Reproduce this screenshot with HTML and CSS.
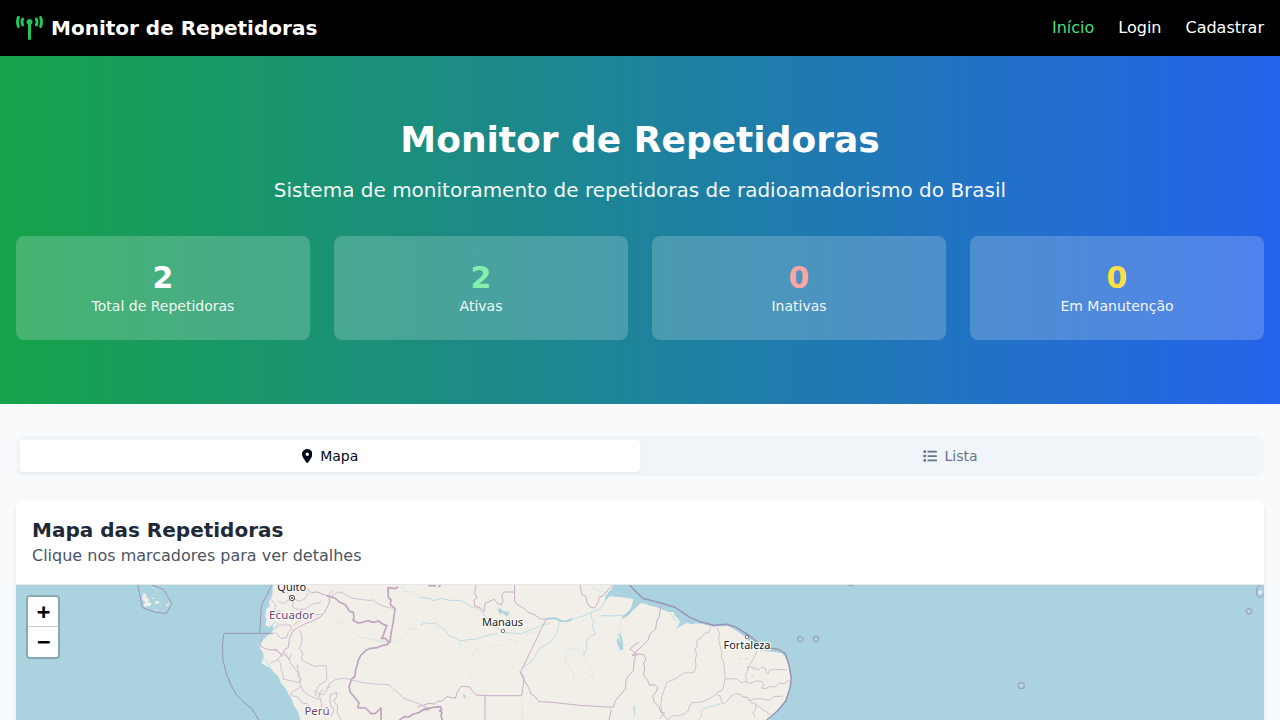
FILE: index.html
```html
<!DOCTYPE html>
<html lang="pt-BR">
<head>
<meta charset="utf-8">
<title>Monitor de Repetidoras</title>
<link rel="stylesheet" href="styles.css">
</head>
<body>
<header class="navbar">
  <div class="brand">
    <svg class="brand-icon" viewBox="0 0 576 512" fill="currentColor"><path d="M80.3 44C69.8 69.9 64 98.2 64 128s5.8 58.1 16.3 84c6.6 16.4-1.3 35-17.7 41.7s-35-1.3-41.7-17.7C7.4 202.6 0 166.1 0 128S7.4 53.4 20.9 20C27.6 3.6 46.2-4.3 62.6 2.3S86.900 27.600 80.300 44zM555.100 20C568.600 53.400 576 89.900 576 128s-7.400 74.600-20.900 108c-6.600 16.400-25.300 24.300-41.700 17.700S489.100 228.400 495.700 212c10.500-25.900 16.300-54.200 16.300-84s-5.800-58.100-16.300-84C489.100 27.600 497 9 513.400 2.300s35 1.300 41.700 17.700zM352 128c0 23.700-12.900 44.400-32 55.400V480c0 17.700-14.300 32-32 32s-32-14.300-32-32V183.400c-19.100-11.100-32-31.700-32-55.400c0-35.300 28.700-64 64-64s64 28.700 64 64zM170.600 76.800C163.800 92.400 160 109.700 160 128s3.800 35.600 10.600 51.200c7.100 16.200-.3 35.100-16.500 42.100s-35.100-.3-42.100-16.500c-10.300-23.600-16-49.600-16-76.800s5.700-53.200 16-76.800c7.100-16.200 25.900-23.600 42.100-16.500s23.600 25.900 16.500 42.100zM464 51.200c10.300 23.600 16 49.600 16 76.800s-5.700 53.200-16 76.800c-7.100 16.200-25.900 23.600-42.100 16.500s-23.600-25.900-16.500-42.100c6.800-15.600 10.600-32.900 10.600-51.200s-3.800-35.600-10.600-51.200c-7.100-16.200 .3-35.100 16.500-42.100s35.100 .3 42.100 16.500z"/></svg>
    <span>Monitor de Repetidoras</span>
  </div>
  <nav class="links"><a class="active">Início</a><a>Login</a><a>Cadastrar</a></nav>
</header>
<section class="hero">
  <h1>Monitor de Repetidoras</h1>
  <p class="lead">Sistema de monitoramento de repetidoras de radioamadorismo do Brasil</p>
  <div class="stats">
    <div class="stat"><div class="num">2</div><div class="label">Total de Repetidoras</div></div>
    <div class="stat"><div class="num green">2</div><div class="label">Ativas</div></div>
    <div class="stat"><div class="num red">0</div><div class="label">Inativas</div></div>
    <div class="stat"><div class="num yellow">0</div><div class="label">Em Manutenção</div></div>
  </div>
</section>
<main class="content">
  <div class="tabs">
    <div class="tab selected">
      <svg class="pin" viewBox="0 0 384 512" fill="currentColor"><path d="M215.700 499.200C267 435 384 279.400 384 192C384 86 298 0 192 0S0 86 0 192c0 87.400 117 243 168.300 307.200c12.300 15.300 35.100 15.300 47.400 0zM192 128a64 64 0 1 1 0 128 64 64 0 1 1 0-128z"/></svg>
      <span>Mapa</span>
    </div>
    <div class="tab">
      <svg class="list" viewBox="0 0 512 512" fill="currentColor"><rect x="16" y="48" width="96" height="96" rx="24"/><rect x="16" y="208" width="96" height="96" rx="24"/><rect x="16" y="368" width="96" height="96" rx="24"/><rect x="160" y="64" width="352" height="64" rx="32"/><rect x="160" y="224" width="352" height="64" rx="32"/><rect x="160" y="384" width="352" height="64" rx="32"/></svg>
      <span>Lista</span>
    </div>
  </div>
  <section class="card">
    <div class="card-head">
      <h2>Mapa das Repetidoras</h2>
      <p>Clique nos marcadores para ver detalhes</p>
    </div>
    <div class="map">
      <svg class="map-canvas" viewBox="0 0 1248 135">
        <!-- land mass -->
        <g transform="translate(194 -5) scale(.33333)">
          <path class="land" d="M190 0L187 45L176 65L180 78L168 88L166 110L170 121L165 136L178 142L188 135L191 149L184 157L172 167L162 177L152 190L151 206L160 219L161 235L154 249L164 256L182 264L193 278L205 290L213 309L226 324L237 345L246 359L252 378L263 394L275 430L1665 430L1690 405L1724 363L1739 325L1743 292L1738 260L1729 235L1716 220L1685 215L1653 212L1628 194L1607 172L1580 153L1553 138L1510 140L1480 133L1458 130L1446 133L1430 129L1414 137L1402 144L1410 125L1403 115L1393 106L1392 96L1378 97L1360 90L1338 81L1320 77L1307 72L1293 69L1281 80L1267 93L1255 106L1240 115L1234 111L1250 99L1262 87L1271 57L1235 52L1200 49L1185 62L1187 48L1199 35L1213 15V0Z"/>
        </g>
        <!-- rivers and lakes -->
        <g class="river" transform="translate(194 -5) scale(.33333)">
          <path d="M180 142l15-17 8 8-8 13M165 238l8 14 10 8"/>
          <path class="thin" d="M372 130l16-4 20 6M430 155l12 15 30 6 40 8 25 5 35-11 19-26 28-9M530 190l-20-7-21-7M580 20l5 14 25 2 22 15 25-1"/>
        </g>
        <g class="river" transform="translate(404 -5) scale(.33333)">
          <path d="M0 53l30 3 12 6 22-7 26 6 35 1 28 19 20 4 15 12 10 17 12 6 8 19 12 4 25 14 20 2 30 2 22-10 22-7 21-11 20-2"/>
          <path d="M0 135l18-7 10 3 20-2 8 10 17 8 14 20 17 6 17 10 24-4 26-2 23-9 22-5 18-3"/>
          <path class="thin" d="M122 184l-2 17M133 181l6 10M157 229l7-15 13-13M207 213l10-13 20-7M240 200l12-7 13-15 20 3 7 15M190 245l12 1M145 298l14-21M290 135l14 9 12 16 18-3 25-2"/>
          <path d="M238 84l12 11 17 2-6 12-12-11-9 3-5-9z" class="lake"/>
          <path class="wide" d="M380 116l28-1 15 8 18 1 15-7"/>
          <path d="M452 119l40-12 25-11 20-7 14-16 7-20 18-9 21-4M418 124l-8 36-13 21-12 9-29 17-12 25-20 21-18 9"/>
          <path d="M513 98l2 17 7 10-5 15 9 22-17 8-8 12-2 30-10 14" />
          <path class="thin" d="M487 203l-56 7 9 14-5 17 22 31 7 24M490 210l10 32 12 23 9 10-3 12-21 9M304 365l4 42-4 13M500 0l25 28 27 8 30 1M540 106l15 6 15-5M612 107l-13 25 4 34"/>
          <path class="wide" d="M655 55l-17 25-11 20-15 9M565 39l30-12 45 20 20 0"/>
          <path d="M610 105l-35 3-31-2"/>
          <path d="M594 173l4 11 10 15 1 11-7-5-7-8-4-14z" class="lake"/>
          <path d="M129 344l7 2 1 8-5-2zM642 377l1 28" class="lake"/>
        </g>
        <g class="river" transform="translate(604 -5) scale(.33333)">
          <path class="wide" d="M0 210l6-14-3-24-6-10"/>
          <path d="M150 100l8 8 8 14M170 148l7-12 8-7 25-2M205 128l-13-4-8-9"/>
          <path d="M246 389l20-9 21-4 15-5M360 238l6-3M376 238l8-2M371 349l15 4M395 287l7-2M397 265l10-8M44 378v28M243 391l2 18-9 11"/>
        </g>
        <!-- borders -->
        <g class="border" transform="translate(194 -5) scale(.33333)">
          <path class="sea" d="M186 15L154 77L149 160M190 160H42L37 195L39 240L50 285L63 315L78 343L98 364L127 388L146 420"/>
          <path d="M290 27l14 11 18-2 20 8 15 4 2 18-14 28-12 16-24 12-27 11-18 10-16 11-10 22-3 26-11 7-2 9-11 4-12-14-14 2-16-3-13-6-6-8 4-8 4-26"/>
          <path class="main" d="M350 47l25 7 13 12 18 8 13 20 11 3 2 14-3 9 15 9 14-2 14-5 18 5 16-4 15 11 10 3-6 13-6 19-5 6 12 0 11 12-5 7-17 3-14 6-19 2-14 6-16 15-8 17-2 11-5 15-2 20-10 8-8 23 4 17 10 12 16 19-4 15 24 1 16 17 13-1 17-16v53M568 420l15-10 13 1 14-9 17-4 18-12 15 0"/>
          <path class="main" d="M565 20l-9 6-22-3 1 29 8 7-2 15 14 11-5 40-7 36-3 27"/>
          <path class="minor" d="M205 64l17 7 9-8 18-8 18 9 16-6 12-18M195 92l15 2 14 13 20-10M250 55l-2 27 14 6 24-1 25-17 15 1 7-9M195 147l14-12 32 0 4 13-10 8-5 16-16 4-13-14-11-7M181 55l17 22-5 14M213 40l20-2M235 46l12 1M250 136l18-14 40-18 27-1M357 52l28-16 12 2 30 17 50 6 12-1 18 13 22 8 20 4M357 46l12-17M263 0l27 20"/>
          <path class="minor" d="M192 213l10-1 11 12-8 14-25 12M211 230l12-7 14 15 7-16M203 239l10 13 0 18 6 9 1 19 25 4 21 6 5-10-8-8 5-12-10-6-7-11-10-14-6-13-9-14M270 150l5 18 1 20-8 17 10 14-4 18 12 9 29 14 12-3 21 0 2 19 1 21-6 9-16 7-10 18 8 12 0 16-26-11-22-15-9-22 3-15-7-12-4-30M273 319l-15 11-13 6-3 14M248 347l12 3 10 7 7 13 14 1 10 9 0 16 14 10M331 342l10 2 9-12 2-12 7 3-3-11 22-14 25-3M329 350l1-13 10-9M360 344l21-7-2 14-8 12 12 15-2 19 12 22M315 330l3 20M331 354l5 27M360 344l1 28 11 20-10 18"/>
          <path class="minor" d="M403 294l50 13 40 5 43 2 13 11 33 30 38 14 40 18"/>
        </g>
        <g class="border" transform="translate(404 -5) scale(.33333)">
          <path d="M168 15l-4 25 7 13-9 7 2 18 16 5 12 12 4-26 17-7 10-4 9 12 12 5 5-14-4-15 8-10 31 0M284 10v53l7 10 22 13 10 10 22 9 16 12 20 0-6 7-73 152 11 16-4 27-4 28H195l0 74M299 274l12 25 15 23 7 20 10 5 14 18 40 2 82 9 101 6 6-20 12-14 19-21 0-21 6-15 17-20 3-30 6-21-20-12 10-9 18-13M480 15l5 28 13 7 3 19 10 13 13 2 11-19 2-13 14-6 17-22 13-9M574 390l-7 30M195 347l-10-1-16-1-8-7-12-17-26-2-12 19-5 17-25-5-15 13-13 1-10 8-15-2-36 11"/>
          <path class="main" d="M0 395l10-6 13-1 15-6 23-2 4 8-6 5 7 4-3 10 4 14M25 17h20v4M55 21l8-8"/>
        </g>
        <g class="border" transform="translate(604 -5) scale(.33333)">
          <path class="sea coast" d="M28 15L68 55L125 70L165 82L210 112L240 125L260 130L280 136L320 133L345 140L385 165L410 185L450 205L475 208L495 220L507 255L514 295L510 325L498 362L475 390L455 408L440 420"/>
          <path d="M122 77l-4 34-8 12-3 24-17 15-6 20-17 15-31 30 24-5 13 3 4 14-6 10 3 20-4 14 14 20 5 13 16-2 8 9-5 13-10 12 4 16 15 16 5 16 12 3-15 17"/>
          <path class="minor" d="M273 142l-7 15-12 3-10 13-14 10 2 17-8 7 6 16-4 17 2 16-2 13-6 9-27 1-30 19-22 9-9 24-7 20-3 22 4 27 17 20 16-13 14 1 20-6 13-11 2-13 8-10 30-2 14-7 9-3 14-10 11-10 12-5 6-15 4-25-2-15-3-30-7-12 1-17-5-20-4-20 2-19-7-14"/>
          <path class="minor" d="M411 210l-7 21-19 29-3 14-5 12 2 17-13 6-16-12-34-1M380 265l10-5 14 6 12 4 9-9 12 5 0 11 6 5 7-12 14-2 36 1M377 306l14 4 21-8 15 3 5 11-8 8 13 2 15-7 13 2 11-10 17-1 14-10 24 2M290 343l12 6 3 18 9 4 20-23 13-7 16 2 5 8 14 2 8 10 10-6 20-1 17 4 14 0 11-10 28-2M385 356l7 11 15 5 0 15-8 13 7 11M407 374l46 31"/>
          <circle class="sea" cx="541" cy="177" r="8"/><circle class="sea" cx="588" cy="177" r="8.500"/>
          <path class="sea" d="M683 14q10 7 18 0"/>
        </g>
        <g class="border" transform="translate(-16 -95) scale(.33333)">
          <path class="sea" d="M412 280L418 310L427 353L466 367L500 370L516 340L490 298L455 285"/>
          <path class="island" d="M429 310l8 1 3 11 8 8-4 6 11 4-4 8-18 2-2-8 6-4-4-6-6-2zM453 322l12 3-5 3zM465 334l10-2 3 6-7 5-6-4zM497 345l11-6-2 6-8 4zM480 344l4 2-3 2zM465 356l6 2-3 4zM456 294h4v3zM465 302h5v3zM491 361l4 1-2 2z"/>
        </g>
        <g class="border" transform="translate(964 -5) scale(.33333)">
          <circle class="sea" cx="807" cy="94" r="8.500"/><circle class="sea" cx="124" cy="317" r="9.500"/>
          <path class="sea" d="M844 10C834 18 829 27 829 40C831 56 848 55 852 42"/>
          <path class="island" d="M836 34l7-3 3 7-6 5-4-3zM806 93h3v3h-3zM123 315h3v3h-3z"/>
        </g>
        <g class="town"><circle cx="276" cy="13" r="2.600"/><circle cx="276" cy="13" r=".7"/><circle class="small" cx="487" cy="46" r="1.700"/><circle class="small" cx="731" cy="52" r="1.700"/></g>
        <g class="place">
          <text x="275.800" y="6">Quito</text>
          <text x="486.500" y="41">Manaus</text>
          <text x="731" y="64" textLength="47">Fortaleza</text>
          <text class="country" x="275.500" y="34" textLength="45">Ecuador</text>
          <text class="country" x="301" y="130" textLength="25">Perú</text>
        </g>
      </svg>
      <div class="zoom">
        <div class="zoom-btn">+</div>
        <div class="zoom-btn">−</div>
      </div>
    </div>
  </section>
</main>
</body>
</html>
```
FILE: styles.css
```css
* { box-sizing: border-box; margin: 0; padding: 0; }
body { font-family: "DejaVu Sans", sans-serif; font-size: 16px; line-height: 24px; background: #f9fafb; color: #1f2937; }
.navbar { height: 56px; padding: 0 16px; background: #000; color: #fff; display: flex; align-items: center; justify-content: space-between; }
.brand { display: flex; align-items: center; gap: 8px; font-size: 20px; line-height: 28px; font-weight: 700; }
.brand-icon { width: 27px; height: 24px; color: #22c55e; }
.links { display: flex; gap: 24px; }
.links .active { color: #4ade80; }
.hero { padding: 64px 16px; background: linear-gradient(to right, #16a34a, #2563eb); color: #fff; text-align: center; }
.hero h1 { font-size: 36px; line-height: 40px; margin-bottom: 16px; }
.lead { font-size: 20px; line-height: 28px; margin-bottom: 32px; opacity: .95; }
.stats { display: grid; grid-template-columns: repeat(4, 1fr); gap: 24px; }
.stat { padding: 24px; border-radius: 8px; background: rgba(255, 255, 255, .2); }
.num { font-size: 30px; line-height: 36px; font-weight: 700; }
.label { font-size: 14px; line-height: 20px; opacity: .93; }
.green { color: #86efac; }
.red { color: #fca5a5; }
.yellow { color: #fde047; }
.content { padding: 32px 16px 0; }
.tabs { display: grid; grid-template-columns: 1fr 1fr; height: 40px; padding: 4px; margin-bottom: 24px; border-radius: 6px; background: #f1f5f9; color: #64748b; font-size: 14px; line-height: 20px; }
.tab { display: flex; align-items: center; justify-content: center; gap: 8px; border-radius: 4px; }
.selected { background: #fff; color: #020817; box-shadow: 0 1px 2px rgba(0, 0, 0, .05); }
.pin { width: 10.5px; height: 14px; }
.list { width: 14px; height: 14px; margin: 0 -.6px 0 .6px; }
.card { border-radius: 8px 8px 0 0; overflow: hidden; background: #fff; box-shadow: 0 4px 6px -1px rgba(0, 0, 0, .1), 0 2px 4px -2px rgba(0, 0, 0, .1); }
.card-head { padding: 16px; border-bottom: 1px solid #e5e7eb; }
.card-head h2 { font-size: 20px; line-height: 28px; }
.card-head p { color: #4b5563; }
.map { position: relative; height: 135px; background: #aad3df; }
.map-canvas { display: block; width: 1248px; height: 135px; }
.land, .island { fill: #f2efe9; stroke: none; }
.river path { fill: none; stroke: #b3d7e1; stroke-width: 2.5; stroke-linejoin: round; }
.river .thin { stroke-width: 1.5; opacity: .65; }
.river .wide { stroke-width: 6; stroke: #aad3df; }
.river .lake { fill: #aad3df; }
.border path, .border circle { fill: none; stroke: #c8afc8; stroke-width: 3; stroke-linejoin: round; }
.border .main { stroke: #bfa4bf; stroke-width: 5; }
.border .minor { stroke: #cbb7cd; stroke-width: 2.5; }
.border .sea { stroke: #9b94b5; stroke-width: 3; }
.border .coast { stroke-width: 4.5; }
.border .island { fill: #f2efe9; stroke: none; }
.town circle { fill: #fff; stroke: #444; stroke-width: 1; }
.town .small { stroke: #777; }
.place text { font-family: "Noto Sans", sans-serif; font-size: 11px; text-anchor: middle; fill: #222; stroke: rgba(255, 255, 255, .75); stroke-width: 2.5px; paint-order: stroke; stroke-linejoin: round; }
.place .country { fill: #6c4675; font-size: 11.5px; }
.zoom { position: absolute; left: 10px; top: 10px; width: 34px; border: 2px solid rgba(0, 0, 0, .2); background-clip: padding-box; border-radius: 4px; }
.zoom-btn { height: 30px; background: #fff; color: #000; text-align: center; text-indent: 1px; font: bold 22px/30px "DejaVu Sans Mono", monospace; }
.zoom-btn:first-child { border-bottom: 1px solid #ccc; border-radius: 2px 2px 0 0; }
.zoom-btn:last-child { border-radius: 0 0 2px 2px; }
```
